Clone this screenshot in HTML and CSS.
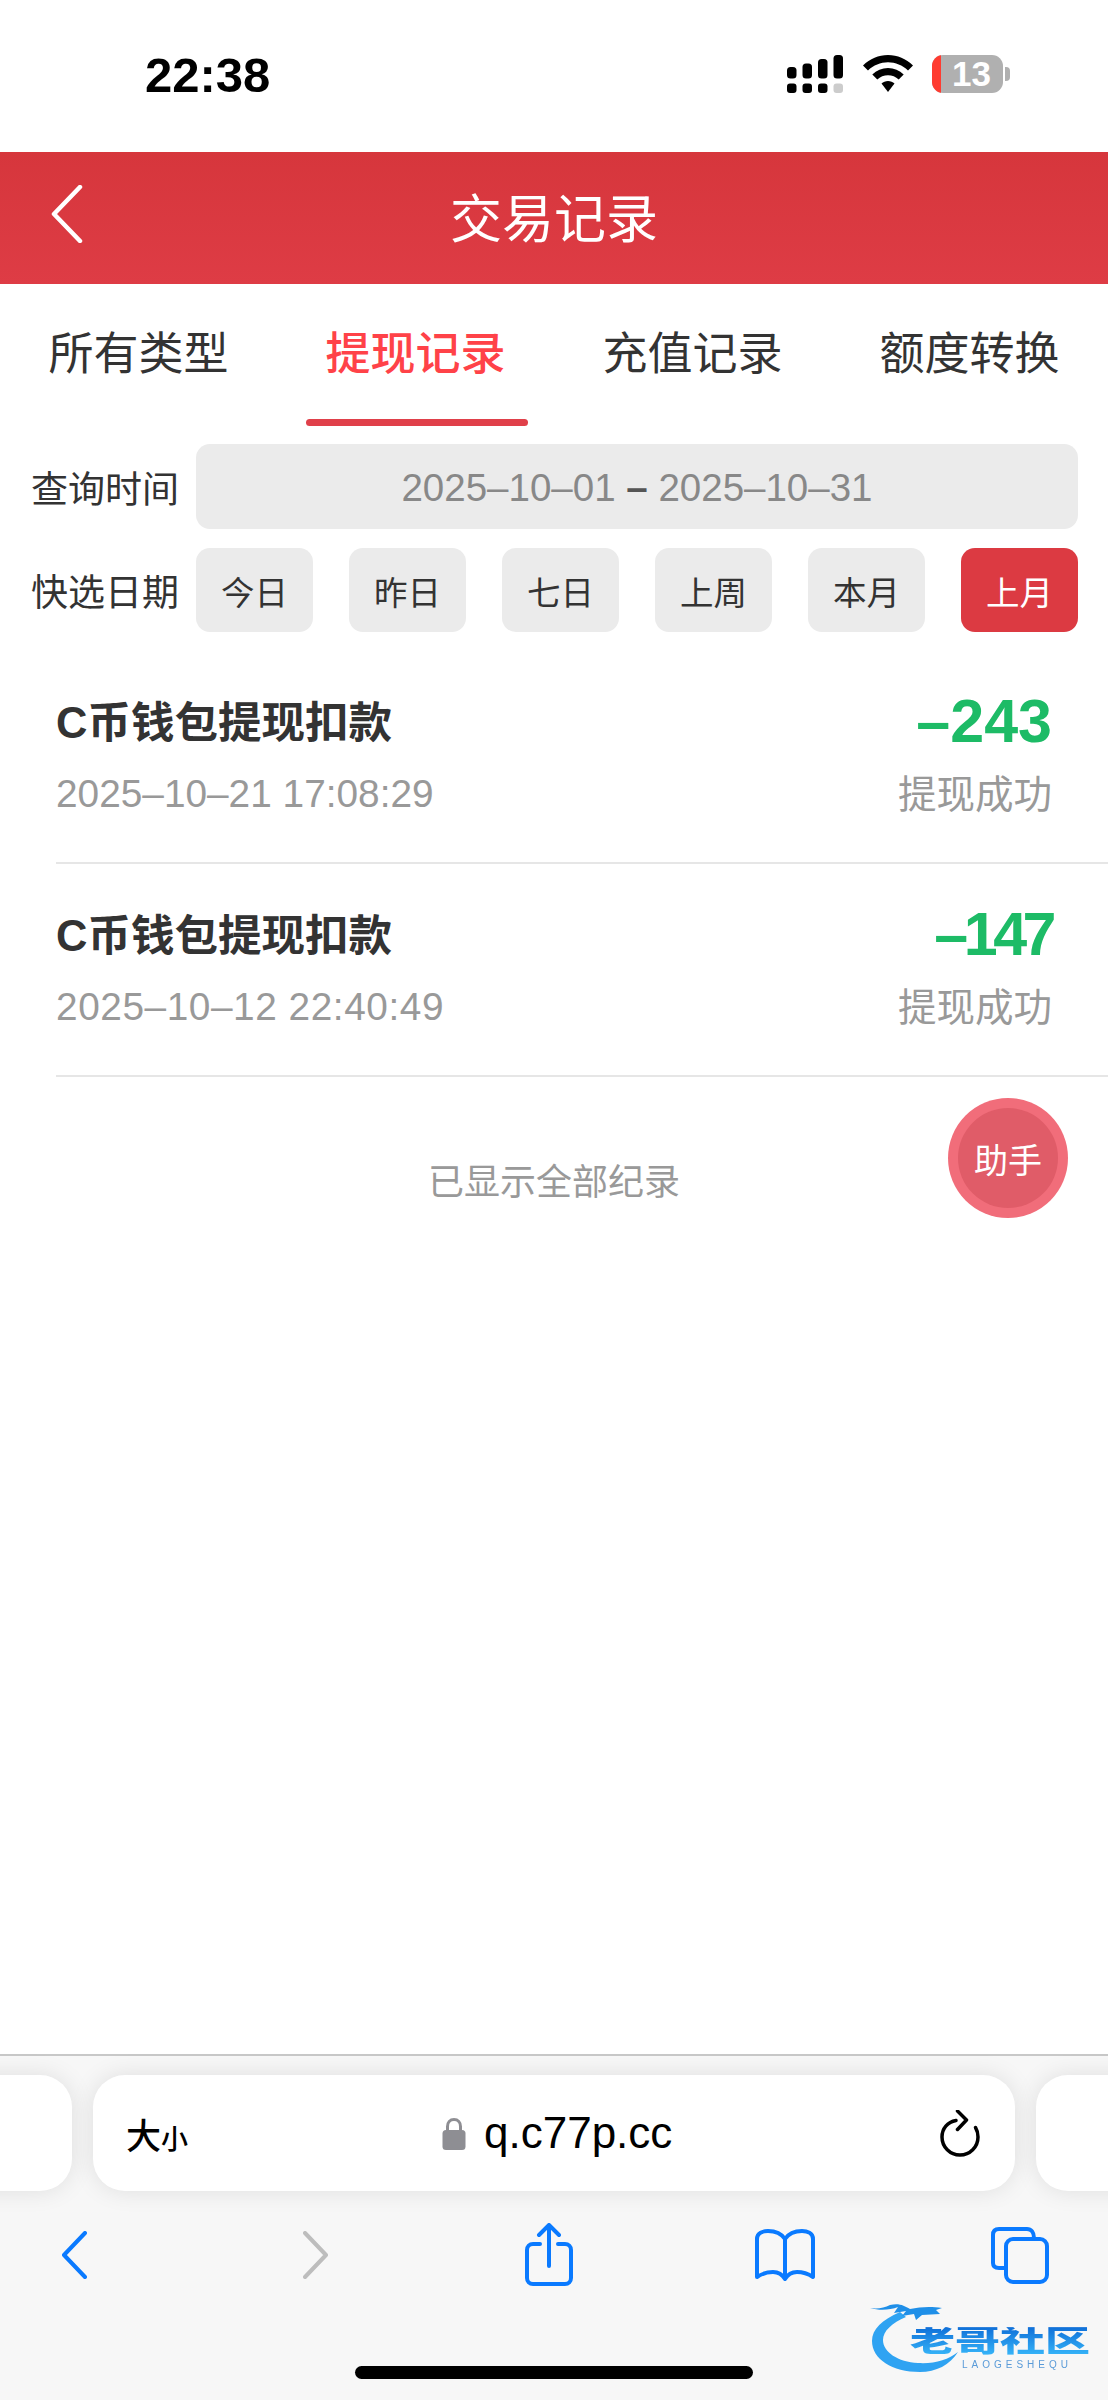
FILE: index.html
```html
<!DOCTYPE html>
<html lang="zh-CN">
<head>
    <meta charset="UTF-8">
    <meta name="viewport" content="width=device-width, initial-scale=1.0">
    <title>交易记录</title>
    <link rel="stylesheet" href="styles.css">
</head>
<body>
    <div class="phone">
        <!-- Status bar -->
        <div class="status-bar">
            <span class="clock">22:38</span>
            <div class="status-icons">
                <svg class="signal" width="56" height="38" viewBox="0 0 56 38">
                    <rect x="0" y="12" width="9.5" height="11.5" rx="3.5"/>
                    <rect x="15.5" y="8.5" width="9.5" height="15" rx="3.5"/>
                    <rect x="31" y="4" width="9.5" height="19.5" rx="3.5"/>
                    <rect x="46.5" y="0" width="9.5" height="23.5" rx="3.5"/>
                    <rect x="0" y="28.5" width="9.5" height="9.5" rx="3"/>
                    <rect x="15.5" y="28.5" width="9.5" height="9.5" rx="3"/>
                    <rect x="31" y="28.5" width="9.5" height="9.5" rx="3"/>
                    <rect class="signal-off" x="46.5" y="28.5" width="9.5" height="9.5" rx="3"/>
                </svg>
                <svg class="wifi" width="50" height="37" viewBox="0 0 50 37">
                    <path d="M25 0C15.5 0 7 3.700 0 10.500L5 15.500C10.500 10.300 17.500 7.300 25 7.300S39.500 10.300 45 15.500L50 10.500C43 3.700 34.500 0 25 0Z"/>
                    <path d="M25 13C19 13 13.500 15.200 9.300 19.500L14.300 24.500C17.200 21.700 21 20.200 25 20.200S32.800 21.700 35.700 24.500L40.700 19.500C36.500 15.200 31 13 25 13Z"/>
                    <path d="M25 26C22.500 26 20.200 26.900 18.500 28.500L25 37L31.500 28.500C29.800 26.900 27.500 26 25 26Z"/>
                </svg>
                <div class="battery">
                    <div class="battery-body">
                        <span class="battery-low"></span>
                        <span class="battery-num">13</span>
                    </div>
                    <span class="battery-nub"></span>
                </div>
            </div>
        </div>

        <!-- Header -->
        <header class="nav-bar">
            <svg class="nav-back" width="32" height="58" viewBox="0 0 32 58">
                <path d="M29 2L3 29L29 56"/>
            </svg>
            <h1>交易记录</h1>
        </header>

        <!-- Tabs -->
        <nav class="tabs">
            <a class="tab">所有类型</a>
            <a class="tab active">提现记录</a>
            <a class="tab">充值记录</a>
            <a class="tab">额度转换</a>
        </nav>

        <!-- Filters -->
        <section class="filters">
            <div class="filter-row">
                <span class="filter-label">查询时间</span>
                <div class="date-range">2025–10–01 <b>–</b> 2025–10–31</div>
            </div>
            <div class="filter-row">
                <span class="filter-label">快选日期</span>
                <div class="quick-dates">
                    <button class="quick-btn">今日</button>
                    <button class="quick-btn">昨日</button>
                    <button class="quick-btn">七日</button>
                    <button class="quick-btn">上周</button>
                    <button class="quick-btn">本月</button>
                    <button class="quick-btn active">上月</button>
                </div>
            </div>
        </section>

        <!-- Records -->
        <main class="records">
            <div class="record">
                <div class="record-line">
                    <span class="record-title">C币钱包提现扣款</span>
                    <span class="record-amount">–243</span>
                </div>
                <div class="record-line">
                    <span class="record-time">2025–10–21 17:08:29</span>
                    <span class="record-state">提现成功</span>
                </div>
            </div>
            <div class="record">
                <div class="record-line">
                    <span class="record-title">C币钱包提现扣款</span>
                    <span class="record-amount tight">–147</span>
                </div>
                <div class="record-line">
                    <span class="record-time wide">2025–10–12 22:40:49</span>
                    <span class="record-state">提现成功</span>
                </div>
            </div>
            <p class="records-end">已显示全部纪录</p>
        </main>

        <div class="helper"><span>助手</span></div>

        <!-- Browser chrome -->
        <footer class="browser">
            <div class="address-row">
                <div class="pill pill-side pill-left"></div>
                <div class="pill pill-main">
                    <span class="text-size">大<small>小</small></span>
                    <div class="url">
                        <svg width="24" height="33" viewBox="0 0 24 33">
                            <path class="lock-arc" d="M5.500 15V9.500C5.500 5.500 8 2.500 12 2.500S18.500 5.500 18.500 9.500V15"/>
                            <rect x="0.500" y="13" width="23" height="20" rx="3.500"/>
                        </svg>
                        <span>q.c77p.cc</span>
                    </div>
                    <svg class="reload" width="40" height="47" viewBox="0 0 40 47">
                        <path d="M16 10.500C7.500 12 2 18.500 2 27C2 37 10 45 20 45S38 37 38 27C38 23 37 20 35.500 17.500"/>
                        <path d="M17.500 1L26.500 10L17.500 19.500"/>
                    </svg>
                </div>
                <div class="pill pill-side pill-right"></div>
            </div>
            <div class="toolbar">
                <svg class="tool tool-back" width="26" height="48" viewBox="0 0 26 48">
                    <path d="M24 2L3 24L24 46"/>
                </svg>
                <svg class="tool tool-forward" width="26" height="48" viewBox="0 0 26 48">
                    <path d="M2 2L23 24L2 46"/>
                </svg>
                <svg class="tool tool-share" width="48" height="63" viewBox="0 0 48 63">
                    <path d="M15 21H8C4.500 21 2 23.500 2 27V55C2 58.500 4.500 61 8 61H40C43.500 61 46 58.500 46 55V27C46 23.500 43.500 21 40 21H33"/>
                    <path d="M24 2V43M14 12L24 2L34 12"/>
                </svg>
                <svg class="tool tool-book" width="60" height="52" viewBox="0 0 60 52">
                    <path d="M30 10C26 4 20 2 13 2C8 2 2 4 2 10V48C8 44 13 43 18 43C23 43 27 45 30 50C33 45 37 43 42 43C47 43 52 44 58 48V10C58 4 52 2 47 2C40 2 34 4 30 10ZM30 10V50"/>
                </svg>
                <svg class="tool tool-tabs" width="58" height="57" viewBox="0 0 58 57">
                    <path d="M15 41H8C4 41 2 39 2 36V8C2 4 4 2 8 2H36C40 2 43 5 43 11"/>
                    <rect x="15" y="12" width="41" height="43" rx="7"/>
                </svg>
            </div>
            <div class="home-bar"></div>
        </footer>

        <!-- Watermark -->
        <div class="watermark">
            <svg class="watermark-logo" width="100" height="74" viewBox="0 0 100 74">
                <path class="dragon" d="M30 12C12 20 2 29 2 41C2 59 22 72 50 72C66 72 80 65 88 52C78 60 64 64 48 63C28 62 13 52 13 40C13 31 22 23 36 17Z"/>
                <path class="dragon-head" d="M0 8C10 11 20 10 28 7L24 13L36 11L32 16L44 14L46 20L52 15L70 14L66 10L72 8C60 6 50 7 40 9C34 6 30 3 20 5C14 8 8 9 0 8Z"/>
            </svg>
            <div class="watermark-text">
                <span class="watermark-name">老哥社区</span>
                <span class="watermark-sub">LAOGESHEQU</span>
            </div>
        </div>
    </div>
</body>
</html>
```

FILE: styles.css
```css
/* General styles */
* {
    box-sizing: border-box;
}

body {
    margin: 0;
    background-color: #fff;
    font-family: "Liberation Sans", "Noto Sans CJK SC", sans-serif;
    color: #333;
}

.phone {
    position: relative;
    display: flex;
    flex-direction: column;
    width: 1108px;
    height: 2400px;
    overflow: hidden;
}

/* Status bar */
.status-bar {
    display: flex;
    justify-content: space-between;
    align-items: flex-start;
    height: 152px;
    padding: 47px 98px 0 145px;
}

.clock {
    font-size: 49px;
    font-weight: 700;
    line-height: 56px;
    color: #000;
}

.status-icons {
    display: flex;
    align-items: flex-start;
    gap: 19px;
    padding-top: 8px;
}

.signal {
    margin-right: 1px;
}

.signal rect {
    fill: #000;
}

.signal .signal-off {
    fill: #ccc;
}

.wifi path {
    fill: #000;
}

.battery {
    display: flex;
    align-items: center;
    gap: 2px;
}

.battery-body {
    position: relative;
    display: flex;
    justify-content: center;
    align-items: center;
    width: 71px;
    height: 38px;
    padding-left: 8px;
    border-radius: 11px;
    background-color: #b0b0b0;
    overflow: hidden;
}

.battery-low {
    position: absolute;
    top: 0;
    left: 0;
    width: 9px;
    height: 100%;
    background-color: #ff3b30;
}

.battery-num {
    font-size: 35px;
    font-weight: 700;
    color: #fff;
}

.battery-nub {
    width: 5px;
    height: 14px;
    border-radius: 0 4px 4px 0;
    background-color: #b0b0b0;
}

/* Header */
.nav-bar {
    position: relative;
    display: flex;
    justify-content: center;
    align-items: center;
    height: 132px;
    padding-bottom: 6px;
    background: linear-gradient(#d6363c, #de3c45);
}

.nav-bar h1 {
    margin: 0;
    font-size: 52px;
    font-weight: 400;
    color: #fff;
}

.nav-back {
    position: absolute;
    top: 33px;
    left: 51px;
}

.nav-back path {
    fill: none;
    stroke: #fff;
    stroke-width: 4.500;
    stroke-linecap: round;
    stroke-linejoin: round;
}

/* Tabs */
.tabs {
    display: flex;
    height: 142px;
    padding-top: 41px;
}

.tab {
    position: relative;
    flex: 1;
    font-size: 45px;
    line-height: 60px;
    text-align: center;
    color: #333;
}

.tab.active {
    font-weight: 500;
    color: #ff4248;
}

.tab.active::after {
    content: "";
    position: absolute;
    left: 29px;
    right: 26px;
    top: 94px;
    height: 7px;
    border-radius: 4px;
    background-color: #e0404a;
}

/* Filters */
.filters {
    display: flex;
    flex-direction: column;
    gap: 19px;
    padding: 18px 30px 0 32px;
}

.filter-row {
    display: flex;
    align-items: center;
    gap: 18px;
}

.filter-label {
    flex: none;
    width: 146px;
    margin-left: -1px;
    margin-right: 1px;
    font-size: 37px;
    white-space: nowrap;
}

.date-range {
    flex: 1;
    height: 85px;
    padding-top: 1px;
    border-radius: 14px;
    background-color: #ebebeb;
    font-size: 38.500px;
    line-height: 85px;
    text-align: center;
    color: #888;
}

.date-range b {
    color: #555;
}

.quick-dates {
    display: flex;
    flex: 1;
    justify-content: space-between;
}

.quick-btn {
    width: 117px;
    height: 84px;
    padding: 0;
    border: none;
    border-radius: 14px;
    background-color: #ebebeb;
    font-family: inherit;
    font-size: 33.500px;
    color: #333;
}

.quick-btn.active {
    background-color: #dc3a42;
    color: #fff;
}

/* Records */
.records {
    flex: 1;
    padding-top: 19px;
}

.record {
    display: flex;
    flex-direction: column;
    justify-content: space-between;
    height: 213px;
    margin-left: 56px;
    padding: 40px 56px 40px 0;
    border-bottom: 2px solid #e6e6e6;
}

.record-line {
    display: flex;
    justify-content: space-between;
    align-items: center;
    height: 56px;
}

.record-title {
    font-size: 43.500px;
    font-weight: 700;
}

.record-amount {
    padding-top: 4px;
    font-size: 61px;
    font-weight: 700;
    color: #1dbb66;
}

/* the 1 is narrower in the original digits */
.record-amount.tight {
    letter-spacing: -4.500px;
}

.record-time {
    font-size: 38.800px;
    color: #999;
}

.record-time.wide {
    letter-spacing: 0.550px;
}

.record-state {
    margin-bottom: 5px;
    font-family: "Noto Sans CJK SC", sans-serif;
    font-size: 38.500px;
    line-height: 1;
    color: #999;
}

.records-end {
    margin: 76px 0 0;
    font-size: 36px;
    text-align: center;
    color: #999;
}

/* Floating helper button */
.helper {
    position: absolute;
    top: 1098px;
    left: 948px;
    display: flex;
    justify-content: center;
    align-items: center;
    width: 120px;
    height: 120px;
    border-radius: 50%;
    background-color: #f16d7a;
}

.helper span {
    display: flex;
    justify-content: center;
    align-items: center;
    width: 100px;
    height: 100px;
    border-radius: 50%;
    background-color: #e05c68;
    font-size: 34px;
    color: #fff;
}

/* Browser chrome */
.browser {
    position: relative;
    height: 346px;
    border-top: 2px solid #c8c8c8;
    background-color: #f7f7f7;
}

.address-row {
    display: flex;
    gap: 21px;
    height: 116px;
    margin-top: 19px;
    margin-left: -100px;
}

.pill {
    flex: none;
    height: 116px;
    border-radius: 32px;
    background-color: #fff;
    box-shadow: 0 0 24px rgba(0, 0, 0, 0.1);
}

.pill-side {
    width: 172px;
}

.pill-main {
    display: flex;
    justify-content: space-between;
    align-items: center;
    position: relative;
    width: 922px;
    padding: 0 35px 0 33px;
}

.text-size {
    font-size: 35px;
    font-weight: 500;
    color: #000;
}

.text-size small {
    font-size: 27px;
}

.url {
    position: absolute;
    left: 349px;
    top: 33px;
    display: flex;
    align-items: center;
    gap: 18px;
    font-size: 44px;
    line-height: 50px;
    color: #000;
}

.url rect {
    fill: #8e8e93;
}

.url .lock-arc {
    fill: none;
    stroke: #8e8e93;
    stroke-width: 3;
}

.reload path {
    fill: none;
    stroke: #000;
    stroke-width: 3.500;
    stroke-linecap: round;
    stroke-linejoin: round;
}

.toolbar {
    position: relative;
    height: 0;
}

.tool {
    position: absolute;
}

.tool path,
.tool rect {
    fill: none;
    stroke: #0a7aff;
    stroke-width: 4;
    stroke-linecap: round;
    stroke-linejoin: round;
}

.tool-back {
    top: 40px;
    left: 61px;
}

.tool-forward {
    top: 40px;
    left: 303px;
}

.tool-forward path {
    stroke: #bdbdbd;
}

.tool-share {
    top: 32px;
    left: 525px;
}

.tool-book {
    top: 38px;
    left: 755px;
}

.tool-tabs {
    top: 36px;
    left: 991px;
}

.home-bar {
    position: absolute;
    bottom: 21px;
    left: 355px;
    width: 398px;
    height: 13px;
    border-radius: 7px;
    background-color: #000;
}

/* Watermark */
.watermark {
    position: absolute;
    top: 2300px;
    left: 870px;
    width: 222px;
    height: 74px;
    filter: blur(0.7px);
}

.watermark-logo {
    position: absolute;
    top: 0;
    left: 0;
}

.dragon {
    fill: #2fa3f2;
}

.dragon-head {
    fill: #1f8fe8;
}

.watermark-text {
    position: absolute;
    top: 20px;
    left: 40px;
    display: flex;
    flex-direction: column;
    align-items: flex-end;
    width: 182px;
}

.watermark-name {
    width: 182px;
    font-size: 45px;
    font-weight: 900;
    line-height: 42px;
    white-space: nowrap;
    transform: scaleY(0.66);
    background: linear-gradient(#0f6fd8, #36b4f8);
    -webkit-background-clip: text;
    background-clip: text;
    color: transparent;
}

.watermark-sub {
    margin-top: -3px;
    margin-right: 20px;
    font-size: 10px;
    line-height: 11px;
    letter-spacing: 4px;
    color: #5a9bd8;
}
```
